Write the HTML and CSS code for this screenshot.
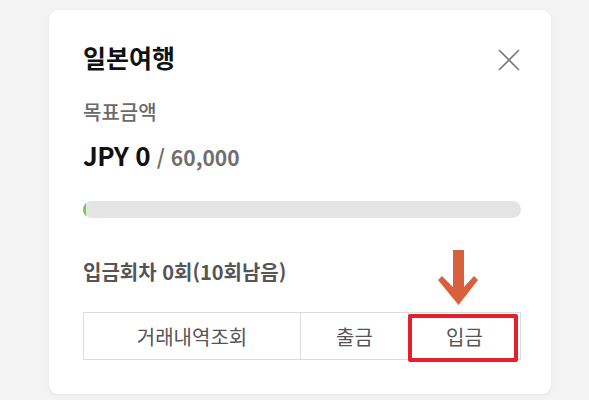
FILE: index.html
```html
<!DOCTYPE html>
<html lang="ko">
<head>
    <meta charset="UTF-8">
    <title>일본여행</title>
    <link rel="stylesheet" href="styles.css">
</head>
<body>
    <div class="card">
        <div class="card-head">
            <h1 class="title">일본여행</h1>
            <svg class="close" width="22" height="22" viewBox="0 0 22 22">
                <path d="M1 1 L21 21 M21 1 L1 21" stroke="#7a7a7a" stroke-width="1.6" fill="none"/>
            </svg>
        </div>
        <div class="label">목표금액</div>
        <div class="amount">JPY 0 <span class="goal">/ 60,000</span></div>
        <div class="bar"><div class="bar-fill" style="width: 3px"></div></div>
        <div class="count">입금회차 0회(10회남음)</div>
        <div class="actions">
            <button>거래내역조회</button>
            <button>출금</button>
            <button class="deposit">입금
                <svg class="arrow" width="40" height="56" viewBox="0 0 40 56">
                    <path d="M15 0 H26 V37 L36 26 L40 30 L20.5 55 L0 30 L4 26 L15 37 Z" fill="#d9603d"/>
                </svg>
                <span class="highlight"></span>
            </button>
        </div>
    </div>
</body>
</html>
```

FILE: styles.css
```css
body {
    margin: 0;
    background-color: #f3f3f3;
    font-family: "Noto Sans CJK KR", "Noto Sans", sans-serif;
    padding: 10px 38px 8px 49px;
}
.card {
    background-color: #fff;
    border-radius: 9px;
    box-shadow: 0 1px 4px rgba(0, 0, 0, 0.06);
    padding: 31px 30px 34px 34px;
}
.card-head {
    display: flex;
    justify-content: space-between;
    align-items: flex-start;
}
.title {
    margin: 0;
    font-size: 25px;
    line-height: 32px;
    font-weight: 700;
    color: #111;
}
.close {
    margin-top: 8px;
    margin-right: 1px;
}
.label {
    margin-top: 27px;
    font-size: 20px;
    line-height: 24px;
    font-weight: 500;
    color: #6b6b6b;
}
.amount {
    margin-top: 15px;
    font-size: 26px;
    line-height: 32px;
    font-weight: 700;
    color: #111;
    letter-spacing: -0.5px;
}
.goal {
    font-size: 21px;
    font-weight: 700;
    color: #6f6f6f;
    letter-spacing: 0;
}
.bar {
    margin-top: 28px;
    height: 17px;
    background-color: #e4e4e4;
    border-radius: 9px;
    overflow: hidden;
}
.bar-fill {
    height: 100%;
    background-color: #7cc750;
}
.count {
    margin-top: 42px;
    font-size: 20px;
    line-height: 24px;
    font-weight: 700;
    color: #555;
}
.actions {
    margin-top: 28px;
    display: grid;
    grid-template-columns: 216px 108px 1fr;
    border: 1px solid #dcdcdc;
}
.actions button {
    height: 46px;
    border: none;
    border-left: 1px solid #dcdcdc;
    background-color: #fff;
    font-family: inherit;
    font-size: 20px;
    color: #555;
    padding: 0;
}
.actions button:first-child {
    border-left: none;
}
.deposit {
    position: relative;
}
.highlight {
    position: absolute;
    left: -1px;
    top: 1px;
    right: 2px;
    bottom: -3px;
    border: 4px solid #e3202b;
    border-radius: 2px;
}
.arrow {
    position: absolute;
    left: 29px;
    top: -63px;
}
```
